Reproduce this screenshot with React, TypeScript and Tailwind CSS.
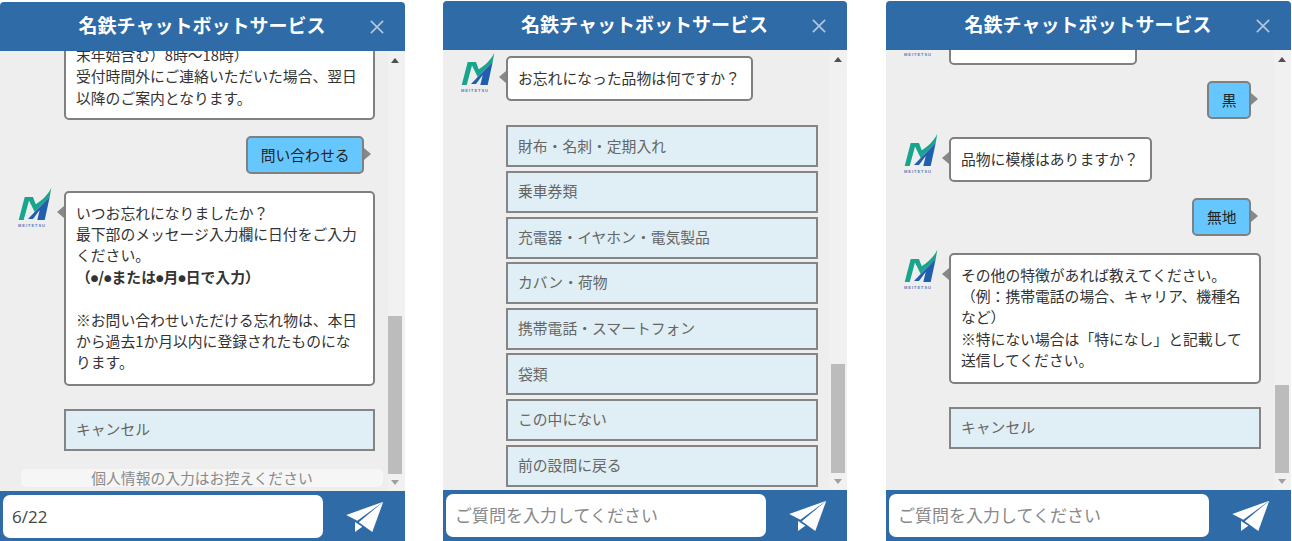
import type { ReactNode } from 'react'

function Logo() {
  return (
    <svg viewBox="0 0 34 40" className="w-[34px] h-[40px] shrink-0">
      <path d="M0.700 33 L6.700 10 L15 10 L17.700 17.300 C24 13 30 8 33.300 0.700 L31.700 10 C27 15 21 20 16.700 25 L11 13.500 L5.700 33 Z" fill="#17a58c" />
      <path d="M10 32 L16.700 25 L31.700 10 L26.700 33 L19.300 33 L21.700 23 L15 32 Z" fill="#1f5fae" />
      <text x="0" y="39.500" fontSize="4" fontWeight="700" fill="#5a7db8" fontFamily="Liberation Sans, sans-serif" textLength="27">MEITETSU</text>
    </svg>
  )
}

function SendIcon() {
  return (
    <svg viewBox="0 0 40 33" className="w-[40px] h-[33px]" fill="#fff">
      <path d="M38.300 1.700 L1.300 15 L12.300 20.700 Z" />
      <path d="M38.300 1.700 L13.800 22.300 L27.300 32 Z" />
      <path d="M10 22 L10 32 L17.300 26.700 Z" />
    </svg>
  )
}

function Dot() {
  return <span className="align-[1px] text-[7.500px] leading-none">●</span>
}

function Bot({ children, width, className = '', topClip = false }: { children: ReactNode; width: string; className?: string; topClip?: boolean }) {
  return (
    <div className={`flex pl-[18px] gap-[11px] ${className}`}>
      <div className="-mt-1 w-[34px] shrink-0">
        <Logo />
      </div>
      <div className={`relative rounded-[5px] border-2 border-[#808080] bg-white pb-[11px] pl-[10px] pr-[11px] pt-[9px] text-[#333] ${width}`}>
        {!topClip && (
          <span className="absolute -left-[9px] top-[13px] border-y-[6px] border-r-[7px] border-y-transparent border-r-[#888]" />
        )}
        {children}
      </div>
    </div>
  )
}

function User({ children, className = '' }: { children: ReactNode; className?: string }) {
  return (
    <div className={`flex justify-end pr-[23px] ${className}`}>
      <div className="relative rounded-[5px] border-2 border-[#808080] bg-[#66c7fe] px-[12.500px] py-[6px] text-[#222]">
        {children}
        <span className="absolute -right-[9px] top-[10px] border-y-[6px] border-l-[7px] border-y-transparent border-l-[#888]" />
      </div>
    </div>
  )
}

function Option({ label }: { label: string }) {
  return (
    <div className="flex h-[42px] w-[312px] items-center border-2 border-[#858585] bg-[#e0eff5] pb-[2px] pl-[10px] text-[#666]">
      {label}
    </div>
  )
}

function Scrollbar({ thumb, inset }: { thumb: string; inset: string }) {
  return (
    <div className={`flex w-[17px] shrink-0 flex-col items-center bg-[#f1f1f1] ${inset}`}>
      <span className="mt-[7px] border-x-[4px] border-b-[5px] border-x-transparent border-b-[#505050]" />
      <div className="flex-1" />
      <div className={`w-[14px] bg-[#bcbcbc] ${thumb}`} />
      <div className="flex h-[17px] items-center justify-center">
        <span className="border-x-[4px] border-t-[5px] border-x-transparent border-t-[#a0a0a0]" />
      </div>
    </div>
  )
}

function Panel({ children, thumb, inset, value, className = '', width }: { children: ReactNode; thumb: string; inset: string; value?: string; className?: string; width: string }) {
  return (
    <section className={`flex h-[540px] flex-col ${width} ${className}`}>
      <header className="relative flex h-[49px] shrink-0 items-center justify-center rounded-t-[4px] bg-[#2e6ba7] pb-[2px] pr-[1px] text-[19px] font-bold text-white">
        名鉄チャットボットサービス
        <svg viewBox="0 0 16 16" className="absolute right-[21px] top-[18px] h-[14px] w-[14px]" stroke="#b4c6dc" strokeWidth="1.900" fill="none">
          <path d="M1 1 L15 15 M15 1 L1 15" />
        </svg>
      </header>
      <div className="relative flex min-h-0 flex-1 bg-[#eeeeee]">
        <div className="relative min-w-0 flex-1 overflow-hidden text-[14.800px] leading-[21.400px]">{children}</div>
        <Scrollbar thumb={thumb} inset={inset} />
      </div>
      <footer className="flex h-[51px] shrink-0 items-center bg-[#2e6ba7] pl-[3px]">
        <input
          readOnly
          value={value ?? ''}
          placeholder="ご質問を入力してください"
          className="h-[43px] w-[320px] rounded-[7px] bg-white px-[9px] font-['Open_Sans','Noto_Sans_CJK_JP',sans-serif] text-[17px] text-[#444] outline-none placeholder:text-[#888]"
        />
        <div className="ml-[22px]">
          <SendIcon />
        </div>
      </footer>
    </section>
  )
}

const items = [
  '財布・名刺・定期入れ',
  '乗車券類',
  '充電器・イヤホン・電気製品',
  'カバン・荷物',
  '携帯電話・スマートフォン',
  '袋類',
  'この中にない',
  '前の設問に戻る',
]

export default function App() {
  return (
    <div className="flex h-[541px] w-[1292px] gap-[38px] overflow-hidden bg-white font-['Noto_Sans_CJK_JP','Liberation_Sans',sans-serif]">
      <Panel width="w-[405px]" className="mt-[2px]" thumb="h-[158px]" inset="pr-[3px]" value="6/22">
        <div className="-mt-[19px] pl-[64px]">
          <div className="w-[311px] rounded-[5px] border-2 border-[#808080] bg-white px-[10px] pb-[10px] pt-[10px] text-[#333]">
            末年始含む）8時～18時）
            <br />
            受付時間外にご連絡いただいた場合、翌日以降のご案内となります。
          </div>
        </div>
        <User className="mt-4 pr-[24px]">問い合わせる</User>
        <Bot width="w-[311px]" className="mt-[17px] gap-[12px]">
          いつお忘れになりましたか？
          <br />
          最下部のメッセージ入力欄に日付をご入力ください。
          <br />
          <b className="font-bold">
            （<Dot />/<Dot />または<Dot />月<Dot />日で入力）
          </b>
          <br />
          <br />
          ※お問い合わせいただける忘れ物は、本日から過去1か月以内に登録されたものになります。
        </Bot>
        <div className="mt-[23px] flex h-[42px] w-[311px] ml-[64px] items-center border-2 border-[#858585] bg-[#e0eff5] pb-[2px] pl-[10px] text-[#666]">キャンセル</div>
        <div className="absolute bottom-[4px] left-[21px] right-[5px] flex h-[18px] items-center justify-center rounded-[5px] bg-[#f6f6f6] text-[#8a8a8a]">
          個人情報の入力はお控えください
        </div>
      </Panel>

      <Panel width="w-[404px]" className="mt-[1px]" thumb="h-[109px]" inset="pr-[1px]">
        <Bot width="w-fit" className="mt-[6px] gap-[11px]">
          お忘れになった品物は何ですか？
        </Bot>
        <div className="mt-[24px] ml-[63px] flex flex-col gap-[3.600px]">
          {items.map((item) => (
            <Option key={item} label={item} />
          ))}
        </div>
      </Panel>

      <Panel width="w-[405px]" className="mt-[1px] ml-px" thumb="h-[88px]" inset="pr-[2px]">
        <Bot width="w-[188px]" className="-mt-[30px]" topClip>
          <span className="invisible">品物の色は何色ですか</span>
        </Bot>
        <User className="mt-4">黒</User>
        <Bot width="w-fit" className="mt-[18px]">品物に模様はありますか？</Bot>
        <User className="mt-4">無地</User>
        <Bot width="w-[312px]" className="mt-[17px]">
          その他の特徴があれば教えてください。
          <br />
          （例：携帯電話の場合、キャリア、機種名など）
          <br />
          ※特にない場合は「特になし」と記載して送信してください。
        </Bot>
        <div className="mt-[23px] ml-[63px] flex h-[42px] w-[312px] items-center border-2 border-[#858585] bg-[#e0eff5] pb-[2px] pl-[10px] text-[#666]">キャンセル</div>
      </Panel>
    </div>
  )
}
